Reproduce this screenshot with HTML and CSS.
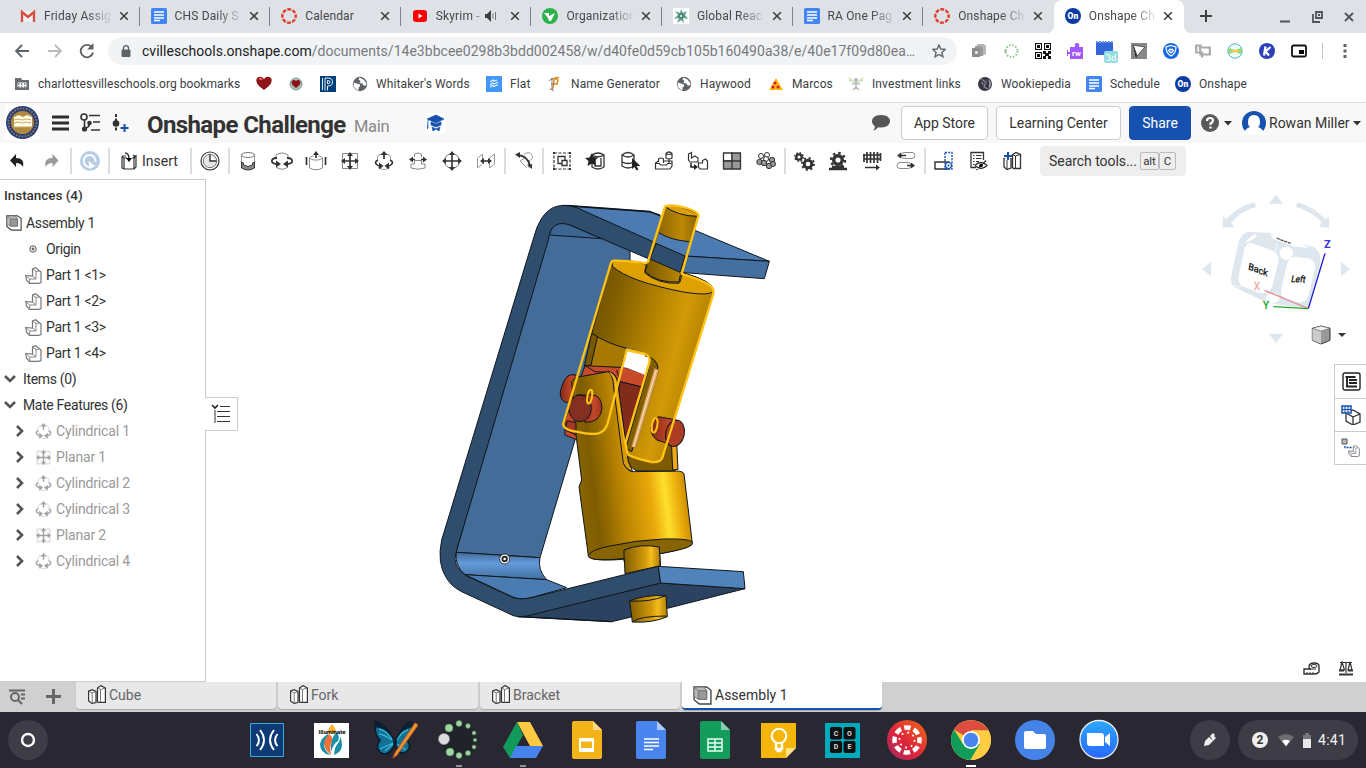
FILE: index.html
```html
<!DOCTYPE html>
<html lang="en">
<head>
<meta charset="utf-8">
<title>Onshape Challenge</title>
<link rel="stylesheet" href="styles.css">
</head>
<body>
<svg class="defs" width="0" height="0">
  <defs>
    <symbol id="doc" viewBox="0 0 16 16"><rect width="16" height="16" rx="1.500" fill="#4285f4"/><path d="M3 4h10M3 7h10M3 9.900h10M3 12.500h6" stroke="#fff" stroke-width="1.500"/></symbol>
    <symbol id="canvas" viewBox="0 0 16 16"><circle cx="8" cy="8" r="6.700" fill="none" stroke="#e03e2d" stroke-width="2.400" stroke-dasharray="3.900 1.360" stroke-dashoffset="1.900"/></symbol>
    <symbol id="on" viewBox="0 0 16 16"><circle cx="8" cy="8" r="8" fill="#0b3aa4"/><text x="8" y="11" text-anchor="middle" font-family="Roboto" font-weight="900" font-size="8.500" fill="#fff">On</text></symbol>
    <symbol id="globe" viewBox="0 0 16 16"><circle cx="8" cy="8" r="7.200" fill="#5f6368"/><path d="M2 6.500l3 1 3 1v2l-1.500 1v3l-2-1-3-3zM7.500 1.500l-1 2 2 1.500-1 2 3 .500 1 2h2.500l.500-2-3-4z" fill="#fff"/></symbol>
    <symbol id="x" viewBox="0 0 10 10"><path d="M1.200 1.200l7.600 7.600M8.800 1.200l-7.600 7.600" stroke="#3c4043" stroke-width="1.600"/></symbol>
    <symbol id="cyl" viewBox="0 0 20 20"><path d="M3.500 8.500V6q1-3 4-3M12.500 3q3 0 4 3v2.500M4 16q6 5 12 0" fill="none" stroke="#999"/><path d="M10 8V3M4 9q-4 2-1.500 4.500Q4 15 7 15M16 9q4 2 1.500 4.500Q16 15 13 15" fill="none" stroke="#333" stroke-width="1.700"/><path d="M10 0l3.500 4h-7zM9.500 15L5 11.500v7zM10.500 15l4.500-3.500v7z" fill="#333"/></symbol>
    <symbol id="planar" viewBox="0 0 20 20"><path d="M2.500 2.500h15v15h-15z" fill="#fff" stroke="#888"/><path d="M10 3v14M3 10h14" stroke="#333" stroke-width="1.700"/><path d="M10 1l3 4H7zM10 19l3-4H7zM1 10l4-3v6zM19 10l-4-3v6z" fill="#333"/></symbol>
    <symbol id="part" viewBox="0 0 17 17"><path d="M.700 8.500L7.500 9V2l3.200-1.300L16 5v10.500L13.500 16.300H4.500L1.500 13z" fill="#fff" stroke="#777" stroke-width="1.200"/><path d="M.700 8.500l4 3.500H11V4.500L7.500 2M11 4.500L14.500 4M7.500 9l3.500 3M4.700 12v4" fill="none" stroke="#888"/></symbol>
    <symbol id="studio" viewBox="0 0 18 19"><path d="M.600 6L4 4.600 8 6.500v11L4 18.400.600 16zM9.500 3L13 .600 17.400 3v14.400H10l-.500-1z" fill="#fff" stroke="#333" stroke-width="1.200"/><path d="M.600 6l3.600 2v10M4.200 8L8 6.500M9.500 3l3 1.500v13M12.500 4.500L17.400 3" fill="none" stroke="#555" stroke-width=".8"/></symbol>
    <symbol id="assembly" viewBox="0 0 18 18"><path d="M1 1h12l4 3v13H6l-5-4z" fill="#fff" stroke="#444" stroke-width="1.300"/><path d="M1 1h9l3 3v8.500H5L1 10z" fill="#b9b9b9" stroke="#666" stroke-width=".8"/><path d="M5 4.500h8v8H5z" fill="#999" stroke="#666" stroke-width=".8"/><path d="M1 1l4 3.500" stroke="#666" stroke-width=".8"/></symbol>
    <symbol id="chev" viewBox="0 0 12 12"><path d="M3 1l5 5-5 5" fill="none" stroke="#555" stroke-width="2.600"/></symbol>
    <symbol id="caret" viewBox="0 0 8 5"><path d="M0 0h8L4 4.500z" fill="#333"/></symbol>
  </defs>
</svg>

<div class="tabs">
  <div class="tab"><svg width="16" height="16"><path d="M1 3h14v11H1z" fill="#eee"/><path d="M2 14V4l6 5 6-5v10" fill="none" stroke="#d54b3d" stroke-width="2.300"/></svg><span class="fade">Friday Assig</span><svg class="x"><use href="#x"/></svg></div>
  <div class="tab"><svg width="16" height="16"><use href="#doc"/></svg><span class="fade">CHS Daily S</span><svg class="x"><use href="#x"/></svg></div>
  <div class="tab"><svg width="16" height="16"><use href="#canvas"/></svg><span>Calendar</span><svg class="x"><use href="#x"/></svg></div>
  <div class="tab"><svg width="16" height="16"><rect x="1" y="2" width="14" height="12" rx="3" fill="#f00"/><path d="M6.500 5.500l4 2.500-4 2.500z" fill="#fff"/></svg><span class="short fade">Skyrim -</span><svg class="sound" width="12" height="12"><path d="M0 4h2l4-4v12L2 8H0z" fill="#3c4043"/><path d="M8 3.500v5M10.500 2v8" stroke="#777"/></svg><svg class="x"><use href="#x"/></svg></div>
  <div class="tab"><svg width="16" height="16"><circle cx="8" cy="8" r="8" fill="#2bb24c"/><path d="M2 5h5v3l6-3-4 8H7L6 10z" fill="#fff"/></svg><span class="fade">Organization</span><svg class="x"><use href="#x"/></svg></div>
  <div class="tab"><svg width="16" height="16"><path d="M0 0h16v16H0z" fill="#fff"/><path d="M8 1l2 4 4-2-2 4 3 4-5-1 1 5-3-3-4 3 2-5-5 1 4-4-3-4 5 2z" fill="#5b9d8c"/><circle cx="8" cy="8" r="2" fill="#c9e0d9" stroke="#315f55"/></svg><span class="fade">Global Reac</span><svg class="x"><use href="#x"/></svg></div>
  <div class="tab"><svg width="16" height="16"><use href="#doc"/></svg><span class="fade">RA One Pag</span><svg class="x"><use href="#x"/></svg></div>
  <div class="tab nosep"><svg width="16" height="16"><use href="#canvas"/></svg><span class="fade">Onshape Ch</span><svg class="x"><use href="#x"/></svg></div>
  <div class="tab active nosep"><svg width="16" height="16"><use href="#on"/></svg><span class="fade">Onshape Ch</span><svg class="x"><use href="#x"/></svg></div>
  <svg class="plus" width="12" height="12"><path d="M6 0v12M0 6h12" stroke="#3c4043" stroke-width="2"/></svg>
  <div class="win">
    <svg width="10" height="14"><path d="M0 11.500h10" stroke="#50545a" stroke-width="2"/></svg>
    <svg width="11" height="12"><path d="M4 1h6v6H4zM1 3v8h7" fill="none" stroke="#50545a" stroke-width="1.800"/><path d="M6 3h2v2H6z" fill="#50545a"/></svg>
    <svg width="10" height="10"><path d="M1 1l8 8M9 1L1 9" stroke="#50545a" stroke-width="1.800"/></svg>
  </div>
</div>

<div class="nav">
  <svg class="n1" width="16" height="14"><path d="M8 1L2 7l6 6M2 7h13" fill="none" stroke="#5f6368" stroke-width="1.800"/></svg>
  <svg class="n2" width="16" height="14"><path d="M8 1l6 6-6 6M14 7H1" fill="none" stroke="#bbb" stroke-width="1.800"/></svg>
  <svg class="n3" width="16" height="16"><path d="M13 4.500A6.200 6.200 0 1 0 14 9.500" fill="none" stroke="#5f6368" stroke-width="1.900"/><path d="M14.500 0v6.500H8z" fill="#5f6368"/></svg>
  <div class="omni">
    <svg width="10" height="12"><path d="M1 5h8v6.500H1z" fill="#5f6368" stroke="#5f6368"/><path d="M2.500 5V3q0-2.300 2.500-2.300T7.500 3v2" fill="none" stroke="#5f6368" stroke-width="1.300"/></svg>
    <span class="url"><b>cvilleschools.onshape.com</b>/documents/14e3bbcee0298b3bdd002458/w/d40fe0d59cb105b160490a38/e/40e17f09d80ea…</span>
    <svg width="14" height="14"><path d="M7 1l1.800 4 4.400.400-3.300 3 1 4.400L7 10.500l-3.900 2.300 1-4.400-3.300-3L5.200 5z" fill="none" stroke="#5f6368" stroke-width="1.400"/></svg>
  </div>
  <div class="exts">
    <svg width="16" height="16"><path d="M6 1h7l2 2v8l-4 2H6z" fill="#b5b5b5"/><path d="M4 3h6l2 2v8H4z" fill="#9a9a9a"/><path d="M1 5h6l2 2v7H1z" fill="#8c8c8c"/><path d="M4 8h3v3H4z" fill="#ddd"/></svg>
    <svg width="16" height="16"><circle cx="8.500" cy="8" r="6" fill="none" stroke="#8bc78f" stroke-width="2" stroke-dasharray="1.500 1.640"/><circle cx="2.500" cy="8" r="1.500" fill="#bbb"/></svg>
    <svg width="16" height="16"><path d="M0 0h7v7H0zM9 0h7v7H9zM0 9h7v7H0zM8 8h3v2h2V8h3v3h-2v2h2v3h-3v-3h-2v3H8v-3h2v-2H8z" fill="#111"/><path d="M1.500 1.500h4v4h-4zM10.500 1.500h4v4h-4zM1.500 10.500h4v4h-4z" fill="none" stroke="#fff"/></svg>
    <svg width="18" height="16"><path d="M4 4h5q-1-4 2-4t2 4h4v12H4v-5H2v2H1V7h1v2h2z" fill="#a259ff"/><text x="10.500" y="13" text-anchor="middle" class="bold" font-size="8" fill="#fff">rw</text></svg>
    <svg width="24" height="24"><path d="M1 2h17v13H1z" fill="#3366d6"/><path d="M1 2h17" stroke="#6f98e8" stroke-width="2" stroke-dasharray="2 1"/><rect x="9" y="11" width="14" height="12" rx="2" fill="#94dde2"/><text x="16" y="20.500" text-anchor="middle" font-size="9.500" fill="#fff">3d</text></svg>
    <svg width="16" height="16"><path d="M0 0h16v16H0z" fill="#888"/><path d="M2 2l12 2-8 9z" fill="#fff" stroke="#555"/><path d="M2 2l4 11-1 2" stroke="#555"/></svg>
    <svg width="16" height="16"><circle cx="8" cy="8" r="8" fill="#1668e8"/><path d="M8 2.500l5 1.500q0 6-5 9-5-3-5-9z" fill="none" stroke="#fff" stroke-width="1.200"/><path d="M8 10L5.500 7.500 7 6l1 1 1-1 1.500 1.500z" fill="none" stroke="#fff" stroke-width="1.200"/></svg>
    <svg width="16" height="16"><path d="M6.500 2.500H1.200v7H7v5M5 7.500v-3h9.800v7H5.500v-4" fill="none" stroke="#aaa" stroke-width="2.200"/></svg>
    <svg width="16" height="16"><circle cx="8" cy="8" r="7.200" fill="#effaf6" stroke="#49b3cc"/><path d="M1.500 5l6.500 2 6.500-2v6L8 9l-6.500 2z" fill="#8ed66e"/><path d="M4 7h8v2H4z" fill="#f5c94c"/></svg>
    <svg width="16" height="16"><circle cx="8" cy="8" r="8" fill="#2c3fbb"/><path d="M6.500 3.500l-1.500 9M11.500 4L6.500 8.500l3.500 4" fill="none" stroke="#fff" stroke-width="2.300"/></svg>
    <svg width="16" height="16"><rect x="1" y="2.500" width="14" height="11" rx="1.500" fill="none" stroke="#111" stroke-width="1.800"/><path d="M8 7h5v4H8z"/></svg>
  </div>
  <i class="navsep"></i>
  <svg width="4" height="14"><path d="M2 0v3M2 5.500v3M2 11v3" stroke="#5f6368" stroke-width="3"/></svg>
</div>

<div class="marks">
  <div class="mk" style="width:241px"><svg width="15" height="16"><path d="M0 2h6l1 2h7v10H0z" fill="#6b6f73"/><path d="M3 7h8v4H3z" fill="#fff" stroke="#fff"/><path d="M3 8h8M3 11h8" stroke="#6b6f73" stroke-dasharray="1.500 1.500" stroke-width="1.500"/></svg><span class="long">charlottesvilleschools.org bookmarks</span></div>
  <div class="mk" style="width:32px"><svg width="16" height="16"><path d="M8 14Q-2 7 1 2q4-3 7 1 3-4 7-1 3 5-7 12z" fill="#8e1418"/><path d="M3 3q2-1 3 1" stroke="#e77" stroke-width="1.500" fill="none"/></svg></div>
  <div class="mk" style="width:32px"><svg width="16" height="16"><circle cx="8" cy="8" r="6" fill="#abb" stroke="#899"/><path d="M8 12q-6-4-4-7 2-2 4 0 2-2 4 0 2 3-4 7z" fill="#8e1418"/></svg></div>
  <div class="mk" style="width:32px"><svg width="16" height="16"><path d="M0 0h16v16H0z" fill="#00407a"/><path d="M5 14.500V2h3q4.500 0 4.500 4T8 10H7.500v4.500M7.500 8V4.500H8q2 0 2 1.500T8 8M2.500 2v12" fill="none" stroke="#fff" stroke-width=".9"/></svg></div>
  <div class="mk" style="width:134px"><svg width="16" height="16"><use href="#globe"/></svg><span>Whitaker's Words</span></div>
  <div class="mk" style="width:61px"><svg width="16" height="16"><path d="M0 0h16v16H0z" fill="#4298f8"/><path d="M4 6l3-2 1 1 3-1M4 9l3-2 1 1 4-2M4 11l3-1.500 1 1 4-2" fill="none" stroke="#e8f4ff" stroke-width="1.100"/></svg><span>Flat</span></div>
  <div class="mk" style="width:129px"><svg width="16" height="16"><path d="M12 2q-4-2-5 3L6 12q-1 2-3 1M4 8h7M4 4q3-3 7 0l-1 4" fill="none" stroke="#d88b25" stroke-width="1.500"/><path d="M2 5q2-3 4-3M5 3v11l2 1" fill="none" stroke="#8080a0"/></svg><span>Name Generator</span></div>
  <div class="mk" style="width:92px"><svg width="16" height="16"><use href="#globe"/></svg><span>Haywood</span></div>
  <div class="mk" style="width:80px"><svg width="16" height="16"><path d="M8 2l7 12H1z" fill="#f9b90d"/><circle cx="7" cy="7" r="1.500" fill="#d31145"/><circle cx="5" cy="11" r="1.500" fill="#d31145"/><circle cx="10" cy="11" r="1.500" fill="#d31145"/></svg><span>Marcos</span></div>
  <div class="mk" style="width:129px"><svg width="16" height="16"><path d="M1 2l4 3H1M15 2l-4 3h4" stroke="#cde6bd" stroke-width="1.600" fill="none"/><circle cx="8" cy="4" r="2" fill="#bbb"/><path d="M8 5v7M4 8l4-1 4 1M5 14l3-3 3 3" fill="none" stroke="#bbb" stroke-width="1.700"/></svg><span>Investment links</span></div>
  <div class="mk" style="width:109px"><svg width="16" height="16"><circle cx="8" cy="8" r="7" fill="#393744"/><path d="M4 3l5 3-2 5 4 2M5 6l1 3" stroke="#8b8596" fill="none" stroke-width="1.200"/><path d="M11 3q3 5 0 10l2-2q2-4-1-7" fill="#d0cbd2"/></svg><span>Wookiepedia</span></div>
  <div class="mk" style="width:89px"><svg width="16" height="16"><use href="#doc"/></svg><span>Schedule</span></div>
  <div class="mk"><svg width="16" height="16"><use href="#on"/></svg><span>Onshape</span></div>
</div>

<div class="head">
  <svg class="seal" width="35" height="35"><path d="M0 0h35v35H0z" fill="#fff"/><circle cx="17.500" cy="17.500" r="16.500" fill="#293c78"/><circle cx="17.500" cy="17.500" r="14" fill="none" stroke="#887e62" stroke-width="2" stroke-dasharray="1.500 1.500"/><circle cx="17.500" cy="17.500" r="11.500" fill="#b08b3e"/><path d="M9 12l5-2 4 2 4-2 5 2v10H9z" fill="#fffbe6"/><path d="M9 15q4-2 8 0 5-2 9 0M9 18q4-2 8 0 5-2 9 0M8 22h19" fill="none" stroke="#c8a75d"/></svg>
  <svg class="burger" width="17" height="16"><path d="M0 2h17M0 8h17M0 14h17" stroke="#2d2d2d" stroke-width="3"/></svg>
  <svg class="tree" width="20" height="20"><circle cx="4" cy="4" r="3" fill="none" stroke="#333" stroke-width="1.600"/><circle cx="4.500" cy="16" r="2.600" fill="#333"/><circle cx="9.500" cy="10" r="2.300" fill="#333"/><path d="M4.500 7v8q5 0 5-5M9 2.500h11M13 9h7M9 17h0M11 17h9" fill="none" stroke="#333" stroke-width="1.600"/></svg>
  <svg class="ver" width="17" height="19"><path d="M4 0v18" stroke="#333" stroke-width="2" stroke-dasharray="3 1.500"/><circle cx="4" cy="9.500" r="3.300" fill="#333"/><path d="M12.500 10v8M8.500 14h8" stroke="#1651b0" stroke-width="2"/></svg>
  <h1>Onshape Challenge</h1><span class="main">Main</span>
  <svg class="cap" width="20" height="20"><rect width="20" height="20" rx="3" fill="#fff"/><path d="M2 6l9-4 8 4-8 4zM6 9l5 2 5-2v3l-5 2-5-2zM7 14l4 2 4-2-1 4-3-2-3 2zM3 7v8l-1 1" fill="#1651b0" stroke="#1651b0" stroke-width=".7"/></svg>
  <svg class="talk" width="20" height="18"><path d="M10 1c6 0 9 3 9 6s-3 6.500-9 6.500q-2 0-3-.300-2 3-5 3 2-1.500 2-4C1 10 1 8 1 7c0-3 3-6 9-6z" fill="#555"/></svg>
  <span class="btn b1">App Store</span><span class="btn b2">Learning Center</span><span class="btn share">Share</span>
  <svg class="help" width="18" height="18"><circle cx="9" cy="9" r="9" fill="#595959"/><path d="M6 7q0-3 3-3t3 2.500Q12 8 9.500 9.500V11" fill="none" stroke="#fff" stroke-width="2.200"/><path d="M8.300 12.500h2.400v2H8.300z" fill="#fff"/></svg>
  <svg class="car" width="8" height="5"><use href="#caret"/></svg>
  <svg class="face" width="24" height="24"><circle cx="12" cy="12" r="12" fill="#1651b0"/><path d="M12 4q6 0 6 7 0 4-2 5 6 2 6 8H2q0-6 6-8-2-1-2-5 0-7 6-7z" fill="#fff"/></svg>
  <span class="user">Rowan Miller</span>
  <svg class="car2" width="8" height="5"><use href="#caret"/></svg>
</div>

<div class="tools">
  <svg class="t" viewBox="0 0 34 20"><path d="M16 3v4q9 0 7 9-2-4-7-4v4l-6-6.500z" fill="#222"/></svg>
  <svg class="t redo" viewBox="0 0 34 20"><path d="M18 3v4q-9 0-7 9 2-4 7-4v4l6-6.500z" fill="#999"/></svg>
  <i></i>
  <svg class="t" viewBox="0 0 34 20"><circle cx="17" cy="10" r="10" fill="#b7cde6"/><path d="M19 15.500A6 6 0 1 1 22.500 11" fill="none" stroke="#fff" stroke-width="1.900"/><path d="M22.500 15l-7-5 1 8z" fill="#fff"/></svg>
  <i></i>
  <div class="insert"><svg width="16" height="18"><path d="M5 4H2l-1 1v11l2 1h10V6h-1l2-2-2-1M13 6l2-2v11l-2 2M3 6v11M1 5l2 1h3" fill="#fff" stroke="#333" stroke-width="1.200"/><path d="M4 1q4 0 4 6" fill="none" stroke="#333" stroke-width="1.500"/><path d="M8 10L5 6h6z"/></svg><span>Insert</span></div>
  <i></i>
  <svg class="t" viewBox="0 0 34 20"><circle cx="17" cy="10" r="9" fill="#fff" stroke="#333" stroke-width="1.200"/><circle cx="17" cy="10" r="6.700" fill="#e6e6e6" stroke="#555" stroke-width=".8"/><path d="M17 3.500v6.500h6.500" fill="#fff" stroke="#333" stroke-width="1.400"/></svg>
  <i></i>
  <svg class="t" viewBox="0 0 34 20"><path d="M10.500 4v7M23.500 4v7" fill="none" stroke="#999"/><path d="M10.500 11v6q6.500 4 13 0v-6l-2 1v2q-4.500 3-9 0v-2z" fill="#888" stroke="#333"/><ellipse cx="17" cy="4" rx="6.500" ry="2.500" fill="#fff" stroke="#777"/></svg>
  <svg class="t" viewBox="0 0 34 20"><path d="M11 7V4q6-4 12 0v3M11 16q6 4.500 12 0" fill="none" stroke="#888"/><path d="M12 7q-6 0-5 4 1 2 6 2M22 7q6 0 5 4-1 2-6 2" fill="none" stroke="#333" stroke-width="1.800"/><path d="M16 13l-5-3.500v7zM18 13l5-3.500v7z" fill="#333"/></svg>
  <svg class="t" viewBox="0 0 34 20"><path d="M10.500 7v10q6.500 3.500 13 0V7q-1-2-4-2M14.500 5q-3 0-4 2 2 2 5 2h3q3 0 5-2" fill="none" stroke="#888"/><path d="M7.500 6v8M26.500 6v8M17 7V2" stroke="#333" stroke-width="1.700"/><path d="M17 0l3 4h-6z" fill="#333"/></svg>
  <svg class="t" viewBox="-7 0 34 20"><use href="#planar" width="20" height="20"/></svg>
  <svg class="t" viewBox="-7 0 34 20"><use href="#cyl" width="20" height="20"/></svg>
  <svg class="t" viewBox="0 0 34 20"><path d="M13.500 6V3q3.500-2 7 0v3M13.500 13H10v4q7 2.500 14 0v-4h-3.500V9.500h-7z" fill="#fff" stroke="#888"/><path d="M10 8.500h4M20 8.500h4" stroke="#333" stroke-width="1.700"/><path d="M8 8.500L12 5.500v6zM26 8.500l-4-3v6z" fill="#333"/></svg>
  <svg class="t" viewBox="0 0 34 20"><circle cx="17" cy="10" r="7.500" fill="#fff" stroke="#777"/><path d="M17 1v18M8 10h18" stroke="#333" stroke-width="1.600"/><path d="M17 0l3 4h-6zM17 20l3-4h-6zM7 10l4-3v6zM27 10l-4-3v6z" fill="#333"/></svg>
  <svg class="t" viewBox="0 0 34 20"><path d="M8.500 17V7l5-4v10zM20.500 17V7l5-4v10z" fill="none" stroke="#999"/><path d="M13 10h8" stroke="#333" stroke-width="1.600"/><path d="M11 10l4-3v6zM23 10l-4-3v6z" fill="#333"/></svg>
  <i></i>
  <svg class="t" viewBox="0 0 34 20"><path d="M17 3q6-3 8 1t-4 6M13 10l5-3 4 3v7M13 10l7 7" fill="none" stroke="#999"/><path d="M11 4q10 1 12 11" fill="none" stroke="#333" stroke-width="1.800"/><path d="M8 3.500L13 1v6zM25 18l-5-4 5-1z" fill="#333"/></svg>
  <i></i>
  <svg class="t" viewBox="0 0 34 20"><path d="M9 2h16v16H9z" fill="none" stroke="#333" stroke-width="1.200" stroke-dasharray="3 1.500"/><path d="M13 5.500h7v7h-7z" fill="#fff" stroke="#333" stroke-width="1.300"/><path d="M17 9.500h5v5h-5z" fill="#fff" stroke="#333" stroke-width="1.300"/><path d="M8 1h2v2H8zM24 1h2v2h-2zM8 17h2v2H8zM24 17h2v2h-2z" fill="#333"/></svg>
  <svg class="t" viewBox="0 0 34 20"><path d="M13 4v12q6 4 12 0V4q-6-4-12 0 6 3.500 12 0M16 8v7h6V7" fill="#fff" stroke="#333" stroke-width="1.300"/><path d="M13 2l1.500 4 4.500.500-3 3 1 5-4-2-4.500 2.500 1-5-3.500-3 4.500-.500z" fill="#222"/></svg>
  <svg class="t" viewBox="0 0 34 20"><path d="M9 4v11q6 4 12 0V4q-6-5-12 0 6 4 12 0M9 11q6 3 12 0" fill="#fff" stroke="#333" stroke-width="1.300"/><path d="M19 7v11l2.500-2 2 3.500 2-1-2-3.500h4z" fill="#222"/></svg>
  <svg class="t" viewBox="0 0 34 20"><path d="M8.500 12l3-2h13.500v5l-2 3H8.500z" fill="#fff" stroke="#333" stroke-width="1.200"/><path d="M8.500 12.500h4l1 1.500h6l1-1.500h4M11.500 11V8q2.500-2 5 0v4M19 7V2.500q3-3 6 0V7q-3 2-6 0zM19 2.500q3 2 6 0M22 8v4" fill="#fff" stroke="#333" stroke-width="1.200"/></svg>
  <svg class="t" viewBox="0 0 34 20"><path d="M7.500 3l3-1.500v5.500l3.500-2 3 2v4H9l-1.500-2zM17.500 12h4V9.500l3-1.500 2 2v8H19l-1.500-2z" fill="#fff" stroke="#333" stroke-width="1.200"/><path d="M10 12v4h4" fill="none" stroke="#222" stroke-width="1.500"/><path d="M17 16l-4-3v6z" fill="#222"/></svg>
  <svg class="t" viewBox="0 0 34 20"><path d="M8.500 2H17v8H8.500z" fill="#fff" stroke="#333" stroke-width="1.300"/><path d="M17 2h8.500v8H17zM8.500 10H17v8H8.500zM17 10h8.500v8H17z" fill="#999" stroke="#333" stroke-width="1.300"/></svg>
  <svg class="t" viewBox="0 0 34 20"><g fill="#999" stroke="#333"><circle cx="12" cy="5" r="2.500" fill="#fff"/><circle cx="18" cy="4" r="2.500" fill="#fff"/><circle cx="17" cy="8" r="2.500" fill="#fff"/><circle cx="23" cy="9" r="2.700"/><circle cx="10.500" cy="11" r="2.700"/><circle cx="15" cy="12" r="2.700"/><circle cx="20" cy="15" r="2.700"/><circle cx="24" cy="13" r="2.500"/></g></svg>
  <i></i>
  <svg class="t" viewBox="0 0 34 20"><g fill="none" stroke="#333"><circle cx="12" cy="6" r="2.700" stroke-width="2.300"/><circle cx="12" cy="6" r="4.200" stroke-width="1.500" stroke-dasharray="1.600 1.700"/><circle cx="21" cy="13" r="3.800" stroke-width="3"/><circle cx="21" cy="13" r="6" stroke-width="2" stroke-dasharray="2 2.700"/></g></svg>
  <svg class="t" viewBox="0 0 34 20"><g fill="none" stroke="#333"><circle cx="17" cy="9" r="4.300" stroke-width="3.500"/><circle cx="17" cy="9" r="7" stroke-width="2.400" stroke-dasharray="2.500 3"/><path d="M8 18h18M11 16h12" stroke-width="2.500"/></g></svg>
  <svg class="t" viewBox="0 0 34 20"><path d="M9 3v8M12 1v11M15.500 1v11M19 1v11M22.500 1v11M25.500 2v8M8 4h18M9 8h16" stroke="#333" stroke-width="1.700"/><path d="M10 16.500h12" stroke="#333" stroke-width="1.500"/><path d="M25 16.500l-4-3v6z" fill="#333"/></svg>
  <svg class="t" viewBox="0 0 34 20"><rect x="12" y="1.500" width="14" height="6" rx="3" fill="#fff" stroke="#888"/><rect x="8" y="11.500" width="14" height="6" rx="3" fill="#fff" stroke="#888"/><path d="M10 4.500h7M18 14.500h6" stroke="#333" stroke-width="1.500"/><path d="M8 4.500l4-3v6zM26 14.500l-4-3v6z" fill="#333"/></svg>
  <i></i>
  <svg class="t" viewBox="0 0 34 20"><path d="M8 11h14v7H8z" fill="#fff" stroke="#333" stroke-width="1.400"/><path d="M18 1.500h7V18h-7z" fill="none" stroke="#1651b0" stroke-width="1.400" stroke-dasharray="2 1.200"/><circle cx="21.500" cy="14.500" r="3" fill="#fff" stroke="#1651b0" stroke-width="1.200"/><circle cx="21.500" cy="14.500" r="1" fill="#1651b0"/></svg>
  <svg class="t" viewBox="0 0 34 20"><path d="M15 16.500H10V1.500h12.500V9" fill="#fff" stroke="#333" stroke-width="1.300"/><path d="M12 4.500h1.500M15 4.500h5.500M12 7.500h1.500M15 7.500h5.500M12 10.500h1.500M15 10.500h3M12 13.500h1.500" stroke="#333"/><path d="M14 14.500q5.500-6 12 0-6 6-12 0M15.500 19L25 9.500" fill="none" stroke="#333" stroke-width="1.400"/><circle cx="20" cy="14.500" r="1.800"/></svg>
  <svg class="t" viewBox="0 0 34 20"><path d="M9 7.500L12 6l4 1.500V17l-4 1.500L9 16zM17.500 3.500L21 1.500l4.500 2v14h-7l-1-1z" fill="#fff" stroke="#333" stroke-width="1.300"/><path d="M12 9v9M20.500 5v13M17.500 3.500l3 1.500 5-1.500" fill="none" stroke="#333"/><path d="M13 1v8M9 5h8" stroke="#fff" stroke-width="4"/><path d="M13 1v8M9 5h8" stroke="#1651b0" stroke-width="2"/></svg>
  <div class="search"><span>Search tools...</span><kbd>alt</kbd><kbd class="c">C</kbd></div>
</div>

<div class="work">
  <div class="side">
    <h2>Instances (4)</h2>
    <div class="row asm"><svg width="16" height="16"><use href="#assembly"/></svg><span>Assembly 1</span></div>
    <div class="row origin"><svg width="8" height="8"><circle cx="4" cy="4" r="3.200" fill="none" stroke="#555"/><path d="M4 2.500v3M2.500 4h3" stroke="#333"/></svg><span>Origin</span></div>
    <div class="row part"><svg width="17" height="17"><use href="#part"/></svg><span>Part 1 &lt;1&gt;</span></div>
    <div class="row part"><svg width="17" height="17"><use href="#part"/></svg><span>Part 1 &lt;2&gt;</span></div>
    <div class="row part"><svg width="17" height="17"><use href="#part"/></svg><span>Part 1 &lt;3&gt;</span></div>
    <div class="row part"><svg width="17" height="17"><use href="#part"/></svg><span>Part 1 &lt;4&gt;</span></div>
    <div class="row group"><svg class="down" width="12" height="12"><use href="#chev"/></svg><span>Items (0)</span></div>
    <div class="row group"><svg class="down" width="12" height="12"><use href="#chev"/></svg><span>Mate Features (6)</span></div>
    <div class="row mate"><svg width="12" height="12"><use href="#chev"/></svg><svg class="mi" width="17" height="17"><use href="#cyl"/></svg><span>Cylindrical 1</span></div>
    <div class="row mate"><svg width="12" height="12"><use href="#chev"/></svg><svg class="mi" width="17" height="17"><use href="#planar"/></svg><span>Planar 1</span></div>
    <div class="row mate"><svg width="12" height="12"><use href="#chev"/></svg><svg class="mi" width="17" height="17"><use href="#cyl"/></svg><span>Cylindrical 2</span></div>
    <div class="row mate"><svg width="12" height="12"><use href="#chev"/></svg><svg class="mi" width="17" height="17"><use href="#cyl"/></svg><span>Cylindrical 3</span></div>
    <div class="row mate"><svg width="12" height="12"><use href="#chev"/></svg><svg class="mi" width="17" height="17"><use href="#planar"/></svg><span>Planar 2</span></div>
    <div class="row mate"><svg width="12" height="12"><use href="#chev"/></svg><svg class="mi" width="17" height="17"><use href="#cyl"/></svg><span>Cylindrical 4</span></div>
  </div>
  <div class="toggle"><svg width="20" height="20"><path d="M1 1l3 3 3-3" fill="none" stroke="#222" stroke-width="1.600"/><path d="M4 6v13" stroke="#999" stroke-width="2"/><path d="M9 2.500h10M6 7.500h13M6 12.500h13M6 17.500h13" stroke="#333" stroke-width="1"/></svg></div>
  <svg class="model" width="360" height="440" viewBox="0 0 1080 1320">
    <defs>
      <linearGradient id="up" gradientUnits="userSpaceOnUse" x1="510" y1="330" x2="830" y2="410"><stop offset="0" stop-color="#765600"/><stop offset=".12" stop-color="#805d00"/><stop offset=".55" stop-color="#b98600"/><stop offset=".78" stop-color="#d29a08"/><stop offset="1" stop-color="#b68200"/></linearGradient>
      <linearGradient id="low" gradientUnits="userSpaceOnUse" x1="455" y1="1000" x2="785" y2="960"><stop offset="0" stop-color="#8a6500"/><stop offset=".15" stop-color="#7e5c00"/><stop offset=".4" stop-color="#bb8500"/><stop offset=".65" stop-color="#eaa90b"/><stop offset=".78" stop-color="#ffe02c"/><stop offset=".9" stop-color="#e9a90a"/><stop offset="1" stop-color="#bd8500"/></linearGradient>
      <linearGradient id="pin"><stop offset="0" stop-color="#805d00"/><stop offset=".6" stop-color="#d69d0c"/><stop offset=".75" stop-color="#f4bd1e"/><stop offset="1" stop-color="#ad7d00"/></linearGradient>
      <linearGradient id="top"><stop offset="0" stop-color="#765600"/><stop offset=".7" stop-color="#bd8905"/><stop offset="1" stop-color="#8a6500"/></linearGradient>
      <linearGradient id="fil" x2="0" y2="1"><stop offset="0" stop-color="#416a95"/><stop offset=".4" stop-color="#639ada"/><stop offset="1" stop-color="#42709e"/></linearGradient>
      <linearGradient id="red"><stop offset="0" stop-color="#812b1a"/><stop offset=".7" stop-color="#c34728"/><stop offset="1" stop-color="#9d3420"/></linearGradient>
    </defs>
    <g stroke="#10161e" stroke-width="3" stroke-linejoin="round">
      <path d="M350 110L420 90 600 180V215L438 740 330 1103 78 1087z" fill="#436c98"/>
      <path d="M358 135Q365 95 405 98L515 146z" fill="#3d6592"/>
      <path d="M78 1087L330 1103Q322 1140 350 1169L105 1154Q75 1130 78 1087z" fill="url(#fil)"/>
      <path d="M105 1154L350 1169 410 1193 300 1224Q265 1232 240 1217z" fill="#4b7cb1"/>
      <path d="M400 46L660 65 1018 214 765 198z" fill="#4b7bb0"/>
      <path d="M410 47L660 65 690 76" fill="none" stroke-width="5"/>
      <path d="M765 198L1018 214 1003 266 750 247z" fill="#44709f"/>
      <path d="M265 1280L692 1179 945 1196 712 1255 545 1295z" fill="#2b4261"/>
      <path d="M765 198L440 53Q370 30 335 85 320 108 312 140L35 1050Q20 1120 50 1165 65 1190 95 1205L250 1277Q267 1283 290 1278L692 1179 685 1129 300 1224Q265 1230 245 1221L110 1158Q65 1130 78 1087L355 150Q362 86 420 105L750 247z" fill="#2f4e6d"/>
      <path d="M265 1280L545 1295" fill="none" stroke-width="4"/>
      <path d="M685 1129L940 1145 945 1196 692 1179z" fill="#4f83b9"/>
      <path d="M582 1080Q630 1060 688 1071L691 1127 585 1151z" fill="url(#pin)"/>
      <path d="M599 1233Q640 1214 708 1217L712 1280Q665 1300 607 1296z" fill="url(#pin)"/>
      <path d="M599 1233Q660 1237 708 1217M607 1296Q628 1278 710 1278" fill="none"/>
      <path d="M440 556Q410 545 397 585 380 625 407 637H440z" fill="url(#red)"/>
      <path d="M485 430L590 475 565 560 540 545 460 558z" fill="#a77900"/>
      <path d="M485 430L503 438 483 525 463 528z" fill="#795900"/>
      <path d="M465 527L590 533 652 556 625 680 540 790 405 735V690z" fill="#c74a2a"/>
      <path d="M465 527L495 545 540 547M570 575L560 540M570 575L640 592" fill="none"/>
      <path d="M570 575L640 592 586 800 545 700z" fill="#812c1b"/>
      <path d="M425 575Q435 560 450 560L535 545Q558 548 565 580L583 825Q594 845 610 845L740 843Q760 844 762 852L787 1060Q790 1075 640 1100 570 1111 530 1110 478 1110 475 1097L447 890 455 870 438 735z" fill="url(#low)"/>
      <path d="M475 1097Q480 1080 540 1068 620 1050 700 1047 790 1045 787 1060 790 1077 645 1098 475 1121 475 1097z" fill="#886400"/>
      <path d="M582 1080Q630 1060 688 1071L691 1110 584 1110z" fill="url(#pin)" stroke="none"/>
      <path d="M582 1115V1080Q630 1060 688 1071L691 1127" fill="none"/>
      <path d="M535 545Q550 560 550 585L580 820Q590 840 608 845 594 818 592 790L563 575Q558 550 535 545z" fill="#d69a09"/>
      <path d="M592 790L595 815Q605 840 625 843H735L725 740 635 700z" fill="#7d5b00"/>
      <path d="M724 752L740 756 744 838 728 840z" fill="#eda813"/>
      <path d="M545 212Q560 210 620 218L755 250Q850 270 850 310L697 805Q692 818 665 816 620 808 590 793L586 760 660 530Q665 500 650 495L590 475Q530 460 485 430z" fill="url(#up)"/>
      <path d="M545 216Q555 207 610 214L760 248Q850 275 850 300 848 320 760 306 600 275 548 230z" fill="#dfa100"/>
      <path d="M590 475L650 493Q663 500 660 515L645 555 590 533 574 532z" fill="#fff" stroke="none"/>
      <path d="M645 497Q680 505 684 532L605 785 587 775 655 540 660 515Q662 500 645 497z" fill="#805e00"/>
      <path d="M673 535L687 540 617 773 604 770z" fill="#e0ae70" stroke="#9f7124" stroke-width="2"/>
      <path d="M679 540L610 770" stroke="#ffe0b5" stroke-width="3"/>
      <path d="M705 50L805 75 750 276Q680 280 645 245z" fill="url(#top)"/>
      <path d="M687 128Q720 150 778 155L765 198 678 160z" fill="#4d7db2" stroke="none"/>
      <path d="M678 160L765 198 750 247 660 207z" fill="#2f4e6d"/>
      <path d="M687 128Q720 150 778 155" fill="none"/>
      <path d="M705 50Q720 38 778 60 814 73 802 79 745 78 705 50z" fill="#dca00a"/>
      <path d="M650 220Q642 250 646 250 685 282 746 280L752 250" fill="none"/>
      <path d="M685 680L740 690V768L680 750Q655 730 667 700z" fill="url(#red)"/>
      <ellipse cx="735" cy="730" rx="28" ry="40" transform="rotate(12 735 730)" fill="#ad3d22"/>
      <path d="M412 692L438 698V735L405 720z" fill="#a33922"/>
      <path d="M440 615H485Q515 615 516 655 512 698 465 697z" fill="url(#red)"/>
      <ellipse cx="450" cy="655" rx="34" ry="40" fill="#833021"/>
    </g>
    <g fill="none" stroke="#ffc414" stroke-width="7" stroke-linejoin="round">
      <path d="M653 218L705 50Q725 40 778 57 808 68 805 78L755 252Q850 280 850 300V312L697 803Q692 818 665 816 620 808 592 793"/>
      <path d="M653 220Q580 210 550 212 544 212 541 225L400 700Q396 718 440 725 480 735 505 730 525 725 533 700L590 480 645 492Q663 500 658 518L586 760 592 793"/>
      <path d="M540 547L555 570 560 610 590 790" stroke-width="3"/>
      <ellipse cx="479" cy="620" rx="7" ry="21" transform="rotate(10 479 620)" stroke-width="6"/>
      <ellipse cx="674" cy="706" rx="8" ry="22" transform="rotate(10 674 706)" stroke-width="6"/>
    </g>
    <circle cx="224" cy="1107" r="12" fill="#222" stroke="#fff" stroke-width="5"/><circle cx="224" cy="1107" r="15" fill="none" stroke="#111" stroke-width="2"/><circle cx="224" cy="1107" r="4" fill="#fff"/>
  </svg>
  <div class="right">
    <svg class="cube" width="176" height="170" viewBox="0 0 528 510">
      <g fill="#dfe7ee"><path d="M237 71l21-27 21 27zM237 462h42l-21 27zM63 246v42l-27-21zM453 246v42l27-21z"/><path d="M98 143v-34l11 8Q145 78 194 67l4 14Q153 92 124 128l9 13zM417 143v-31l-11 6Q370 79 322 67l-4 14Q362 93 395 126l-8 15z"/>
      <path d="M174 156L235 158 300 180 372 202Q398 218 390 255L365 350 354 386 228 367 140 325Q119 315 124 286L145 190Q153 160 174 156z"/></g>
      <path d="M164 188q34-34 36-22-10 18-36 22zM240 161l52 13 46 18 20 12-48-5-60-22z" fill="#fff"/>
      <path d="M180 188L248 212Q271 225 264 251L246 322Q235 346 202 337L155 317Q140 305 148 280L163 207Q168 190 180 188zM315 231L355 235Q381 242 374 270L354 350Q345 373 314 365L285 357Q269 349 275 322L292 250Q300 231 315 231z" fill="#fff"/><circle cx="289" cy="220" r="20" fill="#fff"/><ellipse cx="248" cy="354" rx="21" ry="15" fill="#fff"/>
      <path d="M124 318l80 2M262 188l-7 30" stroke="#fff" stroke-width="2"/><path d="M260 174l22 9 20 7" stroke="#555" stroke-width="4" stroke-dasharray="10 2" fill="none"/>
      <text transform="matrix(.94 .35 -.15 1 174 268)" font-size="28" stroke="#222" stroke-width=".8">Back</text><text transform="matrix(.88 .03 -.2 1 302 306)" font-size="28" stroke="#222">Left</text>
      <path d="M355 386L405 220" stroke="#1919d8" stroke-width="4"/><path d="M355 386L224 331" stroke="#e58d94" stroke-width="4"/><path d="M355 386L250 380" stroke="#22a929" stroke-width="4"/>
      <text x="402" y="203" font-size="33" class="bold" fill="#3838df">Z</text><text x="191" y="331" font-size="30" fill="#efaaaa" stroke="#efaaaa">X</text><text x="219" y="388" font-size="30" fill="#13a31d" stroke="#13a31d">Y</text>
      <path d="M367 445L393 438 420 445V481L393 492 367 481z" fill="#999" stroke="#333" stroke-width="3"/><path d="M367 445L393 453 420 445 393 438z" fill="#eee" stroke="#333"/><path d="M367 446L393 455V491L367 481z" fill="#ccc"/><path d="M444 459h24l-12 12z" fill="#333"/>
    </svg>
    <div class="dock">
      <span><svg width="19" height="19"><rect x="1" y="1" width="17" height="17" rx="2" fill="#fff" stroke="#222" stroke-width="1.400"/><path d="M3.500 5h10M7 8h8M7 11h8M7 14.500h8M5 5v9.500h3" fill="none" stroke="#222" stroke-width="1.900"/></svg></span>
      <span><svg width="20" height="20"><path d="M5 8l7-3 7 4v8l-7 3-7-4zM5 8l7 4v8M12 12l7-3" fill="#fff" stroke="#333" stroke-width="1.300"/><path d="M1 1h9v7H1z" fill="#eee" stroke="#1651b0" stroke-width="1.500"/><path d="M4 1v7M7 1v7M1 4.500h9" stroke="#1651b0"/></svg></span>
      <span><svg width="20" height="20"><path d="M1 1h5v5H1z" fill="#bbb" stroke="#555"/><path d="M4 8v1.500h7" fill="none" stroke="#1651b0" stroke-width="1.400" stroke-dasharray="2 1"/><svg x="7" y="7" width="12" height="12"><use href="#part"/></svg></svg></span>
    </div>
    <div class="measure"><svg width="17" height="13"><path d="M1 7h6q-1-1-1-3 1-3 5-3 5 0 5 3v6q-2 2-4 2H1z" fill="#fff" stroke="#333" stroke-width="1.400"/><ellipse cx="11" cy="4" rx="3" ry="1.500" fill="none" stroke="#333"/><path d="M6 7h7M4 12v-2M7 12v-2M10 12v-2" stroke="#333"/></svg><svg width="14" height="15"><path d="M1 1.500h12M7 1v11M3 1L1 9h4.500zM11 1L9 9h4z" fill="none" stroke="#333" stroke-width="1.200"/><path d="M0 13.500h14M0 9.500h5M9 9.500h5" stroke="#333" stroke-width="2"/></svg></div>
  </div>
</div>

<div class="sheets">
  <svg class="find" width="17" height="16"><path d="M0 1.500h16" stroke="#666" stroke-width="2"/><circle cx="6" cy="8" r="4" fill="none" stroke="#666" stroke-width="2"/><path d="M9 11l4 4M12 5.500h4M12 9.500h4" stroke="#666" stroke-width="2"/></svg>
  <svg class="add" width="15" height="15"><path d="M7.500 0v15M0 7.500h15" stroke="#666" stroke-width="3"/></svg>
  <div class="sheet"><svg width="18" height="19"><use href="#studio"/></svg><span>Cube</span></div>
  <div class="sheet"><svg width="18" height="19"><use href="#studio"/></svg><span>Fork</span></div>
  <div class="sheet"><svg width="18" height="19"><use href="#studio"/></svg><span>Bracket</span></div>
  <div class="sheet on"><svg width="19" height="19"><use href="#assembly"/></svg><span>Assembly 1</span></div>
</div>

<div class="shelf">
  <div class="launch"><svg width="16" height="16"><circle cx="8" cy="8" r="6" fill="none" stroke="#fff" stroke-width="2.400"/></svg></div>
  <div class="apps">
    <svg viewBox="0 0 40 40"><path d="M3.500 3.500h33v33h-33z" fill="#0e3b78" stroke="#33acd9"/><path d="M9.500 14q5 6.500 0 12M13 10q8 10 0 20M30.500 14q-5 6.500 0 12M27 10q-8 10 0 20" fill="none" stroke="#fff" stroke-width="1.900"/></svg>
    <svg viewBox="0 0 40 40"><path d="M3 3h35v35H3z" fill="#fff"/><path d="M21 4q-5 6-4 9h8q1-3-4-9" fill="#fdb32c"/><path d="M17 14q4 8-4 10 0 6 6 11-10-2-10-11 1-6 8-10" fill="#1690a6"/><path d="M18 14q-5 6-5 10 1 6 7 11-2-9 1-13 2-4-3-8" fill="#f16f3d"/><path d="M29 16q1 4-4 10-2 4-2 9 8-3 8-10 0-5-2-9M26 12q-7 6-6 20 2-8 7-11 2-4-1-9" fill="#1690a6"/><text x="21" y="14" text-anchor="middle" font-size="6" class="bold">Illuminate</text></svg>
    <svg viewBox="0 0 40 40"><path d="M19 20Q10 3 0 2q0 15 5 18-5 7 0 12 7 6 14-6zM21 20Q29 3 37 2q0 15-5 18 5 7 0 11-7 6-11-5z" fill="#126f96" stroke="#061c2b" stroke-width="1.500"/><path d="M0 2q11 1 19 18Q10 9 0 7zM37 2q-9 2-16 16Q29 9 37 7z" fill="#072238"/><path d="M17 19Q11 10 4 9M17 20Q8 14 4 14M18 23L5 29M18 24l-8 7M22 20q5-9 11-10M22 24l9 6" stroke="#35b8cf" fill="none" stroke-width="1.300"/><path d="M40 3L20 33l-2 5 4-3L43 5z" fill="#eb9830" stroke="#d45a20"/></svg>
    <svg viewBox="0 0 40 40"><circle cx="20" cy="20" r="17" fill="#202329"/><g fill="#a2d5a1" stroke="#438456" stroke-width=".6"><circle cx="20" cy="3.500" r="3"/><circle cx="29" cy="6" r="2.400"/><circle cx="35" cy="13" r="2"/><circle cx="36" cy="20" r="1.800"/><circle cx="35" cy="27" r="2"/><circle cx="29" cy="33" r="2.600"/><circle cx="20" cy="35.500" r="3"/><circle cx="11" cy="32" r="4"/><circle cx="10" cy="8" r="4"/><circle cx="5" cy="19" r="5.500" fill="#ddd" stroke="#999"/></g></svg>
    <svg viewBox="0 0 40 40"><path d="M14 2h13l13 24H27z" fill="#ffca41"/><path d="M14 2L0 27l7 11 13-23z" fill="#119a59"/><path d="M13 26h27l-7 12H7z" fill="#4683ed"/></svg>
    <svg viewBox="0 0 40 40"><path d="M7 1h19l9 9v27q0 2-2 2H7q-2 0-2-2V3q0-2 2-2" fill="#f3b31a"/><path d="M26 1v9h9z" fill="#fbd981"/><rect x="12" y="18" width="15" height="14" rx="1" fill="#fff"/><path d="M14 21.500h11v6.500H14z" fill="#f3b31a"/></svg>
    <svg viewBox="0 0 40 40"><path d="M7 1h19l9 9v27q0 2-2 2H7q-2 0-2-2V3q0-2 2-2" fill="#4a85ef"/><path d="M26 1v9h9z" fill="#acc8fa"/><path d="M13 19h15M13 22.500h15M13 26h15M13 29.500h9" stroke="#fff" stroke-width="1.600"/></svg>
    <svg viewBox="0 0 40 40"><path d="M7 1h19l9 9v27q0 2-2 2H7q-2 0-2-2V3q0-2 2-2" fill="#139c5b"/><path d="M26 1v9h9z" fill="#88cfb1"/><path d="M13 19h14v12H13zM20 19v12M13 23h14M13 27h14" fill="none" stroke="#e7fff4" stroke-width="1.500"/></svg>
    <svg viewBox="0 0 40 40"><path d="M2 3h35v25l-10 10H2z" fill="#f5b60b"/><path d="M27 38V28h10z" fill="#ffe083"/><circle cx="20" cy="16" r="7.200" fill="none" stroke="#fff" stroke-width="2"/><path d="M17 23v6h6v-6M17.500 31h5" fill="none" stroke="#fff" stroke-width="2.500"/></svg>
    <svg viewBox="0 0 40 40"><path d="M2 3h35v35H2z" fill="#00a9bb"/><g fill="#101010"><rect x="7" y="7" width="12" height="12.500" rx="2"/><rect x="20.500" y="7" width="12" height="12.500" rx="2"/><rect x="7" y="21" width="12" height="12" rx="2"/><rect x="20.500" y="21" width="12" height="12" rx="2"/></g><g class="bold" fill="#ddd" font-size="7" text-anchor="middle"><text x="13" y="16">C</text><text x="26.500" y="16">O</text><text x="13" y="29">D</text><text x="26.500" y="29">E</text></g></svg>
    <svg viewBox="0 0 40 40"><defs><linearGradient id="cv" x1="0" y1="1" x2="1" y2="0"><stop offset="0" stop-color="#a32b63"/><stop offset=".45" stop-color="#dd253a"/><stop offset="1" stop-color="#f46b16"/></linearGradient></defs><circle cx="20" cy="20" r="20" fill="url(#cv)"/><circle cx="20" cy="20" r="12.500" fill="none" stroke="#fff" stroke-width="4.500" stroke-dasharray="6.500 3.320" stroke-dashoffset="3.250"/><circle cx="20" cy="20" r="7.500" fill="none" stroke="#fff" stroke-width="1.800" stroke-dasharray="1.800 4.090"/></svg>
    <svg viewBox="0 0 40 40"><circle cx="20" cy="20" r="20" fill="#ffcd41"/><path d="M20 20L3 9.500A20 20 0 0 1 37.300 10.500H20z" fill="#de4c3f"/><path d="M3 9.500A20 20 0 0 0 19.500 40L29 24 12 24z" fill="#119d58"/><path d="M20 10.500h17.500A20 20 0 0 1 19.500 40L29 24z" fill="#ffcd41"/><circle cx="20" cy="20" r="9" fill="#fff"/><circle cx="20" cy="20" r="7.300" fill="#4984ef"/></svg>
    <svg viewBox="0 0 40 40"><circle cx="20" cy="20" r="20" fill="#4683e8"/><path d="M9 13q0-2 2-2h7l3 3h8q2 0 2 2v11q0 2-2 2H11q-2 0-2-2z" fill="#fff"/></svg>
    <svg viewBox="0 0 40 40"><defs><linearGradient id="zm" x2="0" y2="1"><stop offset="0" stop-color="#2ba8ff"/><stop offset="1" stop-color="#2867ff"/></linearGradient></defs><circle cx="20" cy="19.500" r="19" fill="url(#zm)" stroke="#eee" stroke-width="1.300"/><path d="M8 13h14q3 0 3 3v10H11q-3 0-3-3zM26 17l5-4v13l-5-4z" fill="#fff"/></svg>
  </div>
  <div class="pen"><svg width="14" height="14"><path d="M1 13l1-5 4-4 4 4-4 4zM7 3l3-3 2 2-1 1 2 2-3 3z" fill="#eee"/></svg></div>
  <div class="status"><span class="num">2</span><svg width="16" height="13"><path d="M0 3q8-6 16 0L8 13z" fill="#6d6c75"/><path d="M4 7q4-2.500 8 0l-4 5z" fill="#fff"/></svg><svg width="8" height="15"><path d="M2 0h4v2h2v4H0V2h2z" fill="#77767f"/><path d="M0 6h8v9H0z" fill="#e8e8eb"/></svg><time>4:41</time></div>
</div>
</body>
</html>
```
FILE: styles.css
```css
* { box-sizing: border-box; }
body { margin: 0; width: 1366px; height: 768px; overflow: hidden; background: #fff; font-family: Roboto, "Liberation Sans", sans-serif; color: #333; display: flex; flex-direction: column; }
svg { display: block; flex: none; }
svg text { font-family: Roboto, sans-serif; }
.bold { font-weight: 700; }
.defs { position: absolute; }
span, h1, h2, time { white-space: nowrap; }

.tabs { height: 33px; background: #dee1e6; display: flex; padding-left: 9px; font-size: 12px; color: #45484c; letter-spacing: .15px; flex: none; }
.tab { width: 130.600px; height: 33px; display: flex; align-items: center; padding: 0 11px 1px 11px; position: relative; flex: none; }
.tab:not(.nosep)::after { content: ""; position: absolute; right: 0; top: 7px; width: 1px; height: 19px; background: #808388; }
.tab span { margin-left: 8px; width: 69px; }
.tab .short { width: 46px; margin-right: 0; margin-left: 8px; }
.sound { margin-left: auto; margin-right: 13px; }
.sound + .x { margin-left: 0; }
.fade { -webkit-mask-image: linear-gradient(90deg, #000 62%, transparent); mask-image: linear-gradient(90deg, #000 62%, transparent); }
.short.fade { -webkit-mask-image: linear-gradient(90deg, #000 75%, transparent 115%); mask-image: linear-gradient(90deg, #000 75%, transparent 115%); }
.x { width: 10px; height: 10px; margin-left: auto; }
.active { background: #fff; border-radius: 8px 8px 0 0; }
.active::before { content: ""; position: absolute; left: -8px; right: -8px; bottom: 0; height: 8px; background: radial-gradient(circle at 0 0, transparent 8px, #fff 8.500px) left / 8px 8px no-repeat, radial-gradient(circle at 100% 0, transparent 8px, #fff 8.500px) right / 8px 8px no-repeat; }
.plus { margin: 10px 0 0 16px; }
.win { display: flex; align-items: center; gap: 21.500px; margin-left: auto; padding-right: 12px; }

.nav { height: 36px; flex: none; display: flex; align-items: center; }
.n1 { margin-left: 14px; }
.n2 { margin-left: 17px; }
.n3 { margin: 0 13px 0 16px; }
.omni { width: 849px; height: 28px; border-radius: 14px; background: #f1f3f4; display: flex; align-items: center; padding: 0 11px 0 13px; }
.url { margin-left: 11px; width: 790px; font-size: 14px; letter-spacing: .022px; color: #777a7e; }
.url b { font-weight: 400; color: #202124; }
.exts { display: flex; width: 364px; margin-left: 6px; }
.exts svg { margin: 0 8px; align-self: center; }
.exts svg[width="18"] { margin: 0 7px; }
.exts svg[width="24"] { margin: -4px 4px -6px; }
.navsep { width: 1px; height: 16px; background: #c5c7ca; margin: 0 20px 0 -5px; }

.marks { height: 34px; flex: none; border-bottom: 1px solid #dadada; display: flex; align-items: center; padding: 0 0 3px 15px; font-size: 12px; letter-spacing: .1px; color: #3c4043; }
.mk { display: flex; align-items: center; gap: 8px; flex: none; }
.long { letter-spacing: .06px; }

.head { height: 40px; flex: none; background: #f8f8f8; display: flex; align-items: center; font-size: 15px; color: #333; }
.seal { margin-left: 5px; margin-top: -2px; }
.burger { margin-left: 12px; }
.tree { margin-left: 11px; }
.ver { margin-left: 12px; }
h1 { font-size: 24px; line-height: 30px; margin: 3px 0 0 18px; width: 207px; color: #333; letter-spacing: -.6px; }
.main { font-size: 16.500px; width: 71px; color: #888; margin-top: 6px; letter-spacing: -.3px; }
.cap { margin-bottom: 1px; }
.talk { margin-left: 426px; }
.btn { height: 34px; border: 1px solid #ccc; border-radius: 4px; background: #fff; display: flex; justify-content: center; align-items: center; font-size: 14px; flex: none; }
.b1 { width: 87px; margin-left: 10px; }
.b2 { width: 125px; margin-left: 8px; }
.share { width: 62px; margin-left: 8px; background: #1651b0; border-color: #1651b0; color: #fff; }
.help { margin-left: 10px; }
.car { margin: 0 10px 0 5px; }
.user { margin-left: 3px; width: 84px; font-size: 14px; }

.tools { height: 36px; flex: none; display: flex; align-items: center; }
.t { width: 34px; height: 20px; }
.redo { width: 35px; }
.tools i { width: 4px; height: 26px; border-left: 1px solid transparent; border-right: 1px solid transparent; background: #ddd; background-clip: padding-box; flex: none; }
.insert { width: 78px; display: flex; align-items: center; padding-left: 10px; gap: 5px; font-size: 14px; }
.search { width: 146px; height: 30px; margin-left: 11px; border-radius: 4px; background: #eee; display: flex; align-items: center; padding-left: 9px; font-size: 14px; letter-spacing: -.05px; }
.search span { width: 91px; }
kbd { height: 18px; width: 19px; border: 1px solid #bbb; border-radius: 2px; font: 11.500px/16px Roboto, sans-serif; text-align: center; }
.search .c { width: 17px; }

.work { height: 503px; flex: none; display: flex; }
.side { width: 206px; border-top: 1px solid #ccc; border-right: 1px solid #ccc; border-bottom: 1px solid #ccc; font-size: 14px; letter-spacing: -.35px; }
h2 { margin: 0 0 0 4px; font-size: 13.500px; font-weight: 500; line-height: 30px; letter-spacing: -.05px; }
.row { height: 26px; display: flex; align-items: center; color: #333; }
.asm { padding-left: 6px; gap: 4px; }
.origin { padding-left: 29px; gap: 9px; }
.part { padding-left: 25px; gap: 4px; }
.group { padding-left: 4px; gap: 7px; }
.mate { padding-left: 14px; gap: 4px; color: #999; letter-spacing: -.15px; }
.mi { opacity: .45; margin-left: 5px; }
.down { transform: rotate(90deg); }
.toggle { width: 33px; height: 34px; margin: 218px 0 0 -1px; border: 1px solid #ccc; border-left: 0; background: #fff; display: flex; align-items: center; justify-content: center; flex: none; }
.model { margin: 11px 0 0 192px; }
.right { margin-left: auto; width: 176px; display: flex; flex-direction: column; align-items: flex-end; }
.cube { margin-top: 1px; }
.dock { width: 32px; margin-top: 14px; border: 1px solid #ccc; border-right: 0; }
.dock span { height: 33px; display: flex; align-items: center; justify-content: center; padding: 0 0 1px 1px; }
.dock span + span { border-top: 1px solid #ccc; }
.measure { display: flex; gap: 19px; margin: auto 13px 6px 0; align-items: center; }

.sheets { height: 30px; flex: none; background: #d0d0d0; display: flex; padding-left: 9px; }
.find { margin-top: 7px; }
.add { margin: 7px 15px 0 20px; }
.sheet { width: 200px; height: 27px; margin-right: 2px; background: #e8e8e8; border-radius: 0 0 4px 4px; display: flex; align-items: center; padding: 0 0 2px 12px; gap: 3px; font-size: 14px; color: #666; box-shadow: 0 1px 1px #aaa; flex: none; }
.sheet.on { background: #fff; color: #333; border-bottom: 2px solid #1651b0; height: 28px; padding: 0 0 0 11px; }

.shelf { height: 56px; flex: none; background: #282732; display: flex; align-items: center; }
.launch { width: 40px; height: 40px; border-radius: 50%; margin-left: 8px; background: #3e3d47; display: flex; align-items: center; justify-content: center; flex: none; }
.apps { display: flex; gap: 24px; margin-left: 199px; height: 54px; padding: 7px 0; background: linear-gradient(#fff, #fff) 719px 100% / 10px 2px no-repeat, linear-gradient(#91919a, #91919a) 209px 100% / 6px 2px no-repeat, linear-gradient(#91919a, #91919a) 273px 100% / 6px 2px no-repeat; }
.apps svg { width: 40px; height: 40px; overflow: visible; }
.pen { width: 40px; height: 40px; border-radius: 50%; background: #3e3d47; margin-left: 71px; display: flex; align-items: center; justify-content: center; }
.status { width: 120px; height: 40px; border-radius: 20px; background: #3e3d47; margin-left: 8px; display: flex; align-items: center; padding-left: 14px; color: #f2f2f4; }
.num { width: 16px; height: 16px; border-radius: 50%; background: #eee; color: #333; font: bold 12px/16px Roboto, sans-serif; text-align: center; margin-right: 10px; }
.status svg + svg { margin-left: 9px; }
time { font-size: 14px; margin-left: 7px; letter-spacing: .3px; }
```
